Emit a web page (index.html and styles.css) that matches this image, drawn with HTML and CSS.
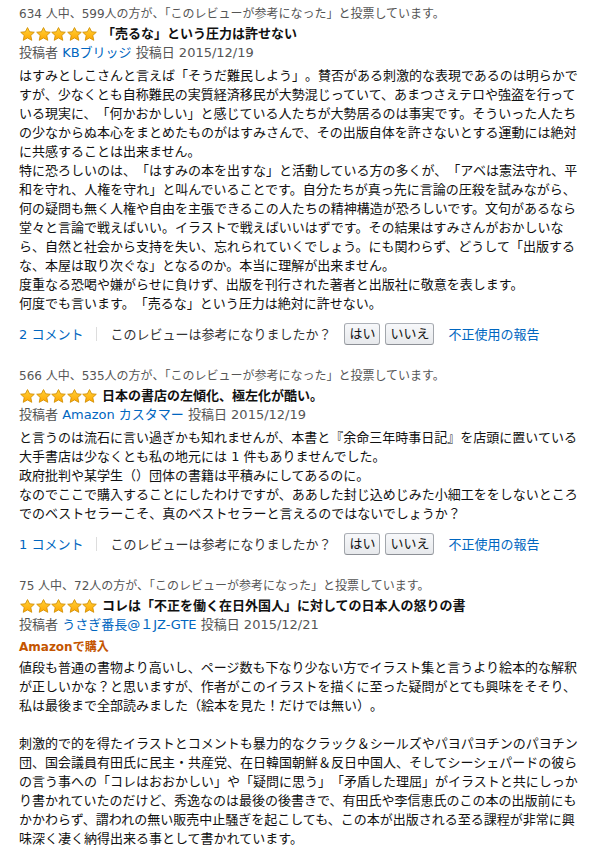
FILE: index.html
```html
<!DOCTYPE html>
<html lang="ja">
<head>
<meta charset="utf-8">
<title>カスタマーレビュー</title>
<link rel="stylesheet" href="styles.css">
</head>
<body>
<svg width="0" height="0" class="defs" aria-hidden="true">
  <defs>
    <linearGradient id="sg" x1="0" y1="0" x2="0" y2="1">
      <stop offset="0" stop-color="#ffd23a"/>
      <stop offset="1" stop-color="#ffa600"/>
    </linearGradient>
    <symbol id="star" viewBox="0 0 16 15">
      <polygon points="8,0.6 10.3,5.1 15.3,5.6 11.5,9.1 12.6,14.3 8,11.7 3.4,14.3 4.5,9.1 0.7,5.6 5.7,5.1" fill="url(#sg)" stroke="#cf8d00" stroke-width="0.9" stroke-linejoin="round"/>
    </symbol>
  </defs>
</svg>

<div class="review">
  <div class="votes">634 人中、599人の方が、「このレビューが参考になった」と投票しています。</div>
  <div class="title-row">
    <span class="stars"><svg viewBox="0 0 16 15"><use href="#star"/></svg><svg viewBox="0 0 16 15"><use href="#star"/></svg><svg viewBox="0 0 16 15"><use href="#star"/></svg><svg viewBox="0 0 16 15"><use href="#star"/></svg><svg viewBox="0 0 16 15"><use href="#star"/></svg></span>
    <span class="title">「売るな」という圧力は許せない</span>
  </div>
  <div class="byline">投稿者 <a href="#">KBブリッジ</a> 投稿日 2015/12/19</div>
  <div class="text">はすみとしこさんと言えば「そうだ難民しよう」。賛否がある刺激的な表現であるのは明らかですが、少なくとも自称難民の実質経済移民が大勢混じっていて、あまつさえテロや強盗を行っている現実に、「何かおかしい」と感じている人たちが大勢居るのは事実です。そういった人たちの少なからぬ本心をまとめたものがはすみさんで、その出版自体を許さないとする運動には絶対に共感することは出来ません。<br>特に恐ろしいのは、「はすみの本を出すな」と活動している方の多くが、「アベは憲法守れ、平和を守れ、人権を守れ」と叫んでいることです。自分たちが真っ先に言論の圧殺を試みながら、何の疑問も無く人権や自由を主張できるこの人たちの精神構造が恐ろしいです。文句があるなら堂々と言論で戦えばいい。イラストで戦えばいいはずです。その結果はすみさんがおかしいなら、自然と社会から支持を失い、忘れられていくでしょう。にも関わらず、どうして「出版するな、本屋は取り次ぐな」となるのか。本当に理解が出来ません。<br>度重なる恐喝や嫌がらせに負けず、出版を刊行された著者と出版社に敬意を表します。<br>何度でも言います。「売るな」という圧力は絶対に許せない。</div>
  <div class="actions">
    <a href="#" class="comments">2 コメント</a>
    <span class="sep"></span>
    <span class="ask">このレビューは参考になりましたか？</span>
    <button class="btn">はい</button>
    <button class="btn">いいえ</button>
    <a href="#" class="report">不正使用の報告</a>
  </div>
</div>

<div class="review">
  <div class="votes">566 人中、535人の方が、「このレビューが参考になった」と投票しています。</div>
  <div class="title-row">
    <span class="stars"><svg viewBox="0 0 16 15"><use href="#star"/></svg><svg viewBox="0 0 16 15"><use href="#star"/></svg><svg viewBox="0 0 16 15"><use href="#star"/></svg><svg viewBox="0 0 16 15"><use href="#star"/></svg><svg viewBox="0 0 16 15"><use href="#star"/></svg></span>
    <span class="title">日本の書店の左傾化、極左化が酷い。</span>
  </div>
  <div class="byline">投稿者 <a href="#">Amazon カスタマー</a> 投稿日 2015/12/19</div>
  <div class="text">と言うのは流石に言い過ぎかも知れませんが、本書と『余命三年時事日記』を店頭に置いている大手書店は少なくとも私の地元には 1 件もありませんでした。<br>政府批判や某学生（）団体の書籍は平積みにしてあるのに。<br>なのでここで購入することにしたわけですが、ああした封じ込めじみた小細工ををしないところでのベストセラーこそ、真のベストセラーと言えるのではないでしょうか？</div>
  <div class="actions">
    <a href="#" class="comments">1 コメント</a>
    <span class="sep"></span>
    <span class="ask">このレビューは参考になりましたか？</span>
    <button class="btn">はい</button>
    <button class="btn">いいえ</button>
    <a href="#" class="report">不正使用の報告</a>
  </div>
</div>

<div class="review">
  <div class="votes">75 人中、72人の方が、「このレビューが参考になった」と投票しています。</div>
  <div class="title-row">
    <span class="stars"><svg viewBox="0 0 16 15"><use href="#star"/></svg><svg viewBox="0 0 16 15"><use href="#star"/></svg><svg viewBox="0 0 16 15"><use href="#star"/></svg><svg viewBox="0 0 16 15"><use href="#star"/></svg><svg viewBox="0 0 16 15"><use href="#star"/></svg></span>
    <span class="title">コレは「不正を働く在日外国人」に対しての日本人の怒りの書</span>
  </div>
  <div class="byline">投稿者 <a href="#">うさぎ番長@１JZ-GTE</a> 投稿日 2015/12/21</div>
  <div class="badge">Amazonで購入</div>
  <div class="text after-badge">値段も普通の書物より高いし、ページ数も下なり少ない方でイラスト集と言うより絵本的な解釈が正しいかな？と思いますが、作者がこのイラストを描くに至った疑問がとても興味をそそり、私は最後まで全部読みました（絵本を見た！だけでは無い）。<br><br>刺激的で的を得たイラストとコメントも暴力的なクラック＆シールズやパヨパヨチンのパヨチン団、国会議員有田氏に民主・共産党、在日韓国朝鮮＆反日中国人、そしてシーシェパードの彼らの言う事への「コレはおおかしい」や「疑問に思う」「矛盾した理屈」がイラストと共にしっかり書かれていたのだけど、秀逸なのは最後の後書きで、有田氏や李信恵氏のこの本の出版前にもかかわらず、謂われの無い販売中止騒ぎを起こしても、この本が出版される至る課程が非常に興味深く凄く納得出来る事として書かれています。</div>
</div>
</body>
</html>
```

FILE: styles.css
```css
html, body {
  background: #fff;
}

body {
  margin: 0;
  padding: 5px 17px 0 19px;
  font-family: "DejaVu Sans", "Noto Sans CJK JP", sans-serif;
  font-size: 13px;
  line-height: 19px;
  color: #111;
  text-spacing-trim: space-all;
}

.defs {
  position: absolute;
  width: 0;
  height: 0;
  overflow: hidden;
}

a {
  color: #0066c0;
  text-decoration: none;
}

.review {
  width: 560px;
  margin-bottom: 22px;
}

.votes {
  font-size: 12px;
  color: #555;
  text-spacing-trim: normal;
}

.title-row {
  display: flex;
  align-items: center;
  gap: 5px;
}

.stars {
  display: flex;
  gap: 0.5px;
  padding-left: 1px;
}

.stars svg {
  width: 15px;
  height: 14px;
  display: block;
}

.title {
  font-weight: bold;
  color: #111;
}

.byline {
  color: #555;
}

.text {
  margin-top: 4px;
  color: #111;
}

.badge {
  margin-top: 4px;
  font-size: 12px;
  font-weight: bold;
  color: #c45500;
}

.text.after-badge {
  margin-top: 1px;
}

.actions {
  display: flex;
  align-items: center;
  margin-top: 10px;
  height: 22px;
}

.sep {
  width: 1px;
  height: 14px;
  background: #ddd;
  margin: 0 13px;
}

.ask {
  color: #333;
  margin-right: 13px;
}

.btn {
  font-family: inherit;
  font-size: 13px;
  color: #111;
  height: 22px;
  padding: 0 4px;
  margin: 0 5px 0 0;
  line-height: 20px;
  background: linear-gradient(#f7f8fa, #e7e9ec);
  border: 1px solid;
  border-color: #adb1b8 #a2a6ac #8d9096;
  border-radius: 3px;
}

.report {
  margin-left: 9px;
}
```
